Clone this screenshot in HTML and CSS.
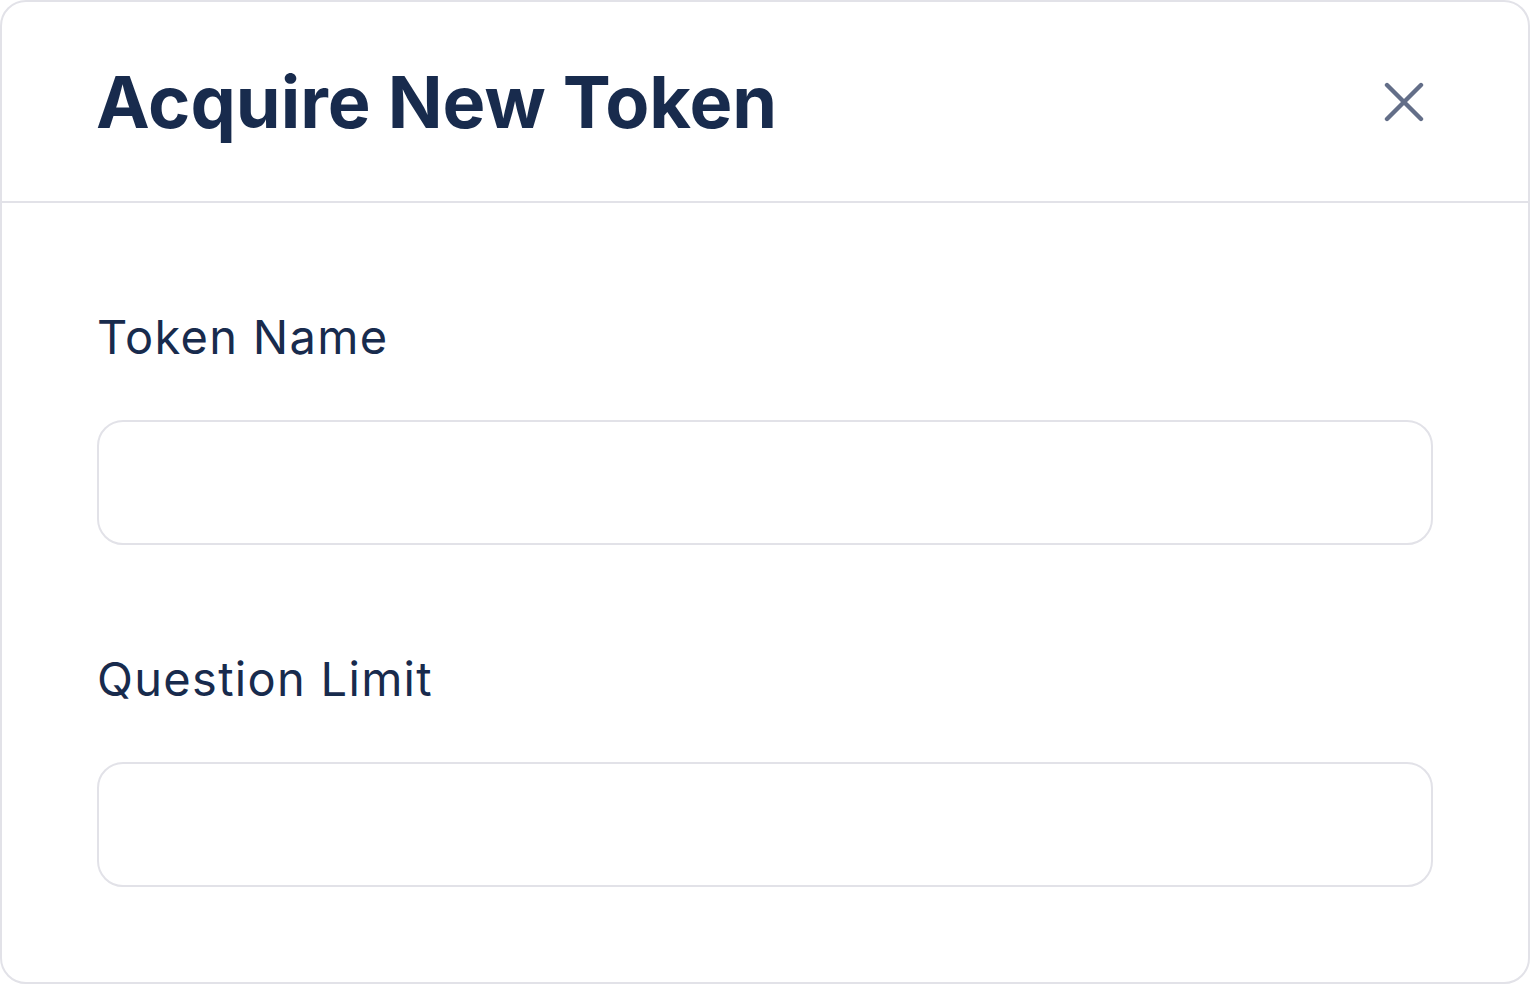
FILE: index.html
```html
<!DOCTYPE html>
<html lang="en">
<head>
<meta charset="utf-8">
<title>Acquire New Token</title>
<link rel="stylesheet" href="styles.css">
</head>
<body>
<div class="modal">
  <header class="modal-header">
    <h1 class="modal-title">Acquire New Token</h1>
    <button class="close-btn" type="button" aria-label="Close">
      <svg width="40" height="40" viewBox="0 0 40 40" fill="none">
        <path d="M3 3L37 37M37 3L3 37" stroke="#636e88" stroke-width="4.4" stroke-linecap="round"/>
      </svg>
    </button>
  </header>
  <div class="modal-body">
    <label class="field">
      <span class="field-label">Token Name</span>
      <input class="field-input" type="text">
    </label>
    <label class="field">
      <span class="field-label">Question Limit</span>
      <input class="field-input" type="text">
    </label>
  </div>
</div>
</body>
</html>
```
FILE: styles.css
```css
* { box-sizing: border-box; }
html, body { margin: 0; padding: 0; background: #ffffff; }
body {
  font-family: Inter, "Noto Sans", sans-serif;
  color: #182b4d;
}
.modal {
  width: 1530px;
  height: 984px;
  border: 2px solid #e2e2e8;
  border-radius: 26px;
  background: #fff;
  overflow: hidden;
}
.modal-header {
  height: 201px;
  border-bottom: 2px solid #e2e2e8;
  display: flex;
  align-items: center;
  justify-content: space-between;
  padding: 0 104px 0 94px;
}
.modal-title {
  margin: 0;
  font-size: 72px;
  font-weight: 700;
  line-height: 1;
  color: #182b4d;
}
.close-btn {
  border: 0;
  background: none;
  padding: 0;
  width: 40px;
  height: 40px;
  display: flex;
  align-items: center;
  justify-content: center;
  cursor: pointer;
}
.close-btn svg { width: 40px; height: 40px; display: block; }
.modal-body {
  padding: 101px 95px 0 95px;
  display: flex;
  flex-direction: column;
  gap: 101px;
}
.field {
  display: flex;
  flex-direction: column;
  gap: 50px;
}
.field-label {
  font-size: 47px;
  line-height: 66px;
  letter-spacing: 1.3px;
  color: #182b4d;
}
.field-input {
  height: 125px;
  width: 100%;
  border: 2px solid #e2e2e8;
  border-radius: 26px;
  background: #fff;
  font: inherit;
  font-size: 40px;
  padding: 0 30px;
  outline: none;
}
```
